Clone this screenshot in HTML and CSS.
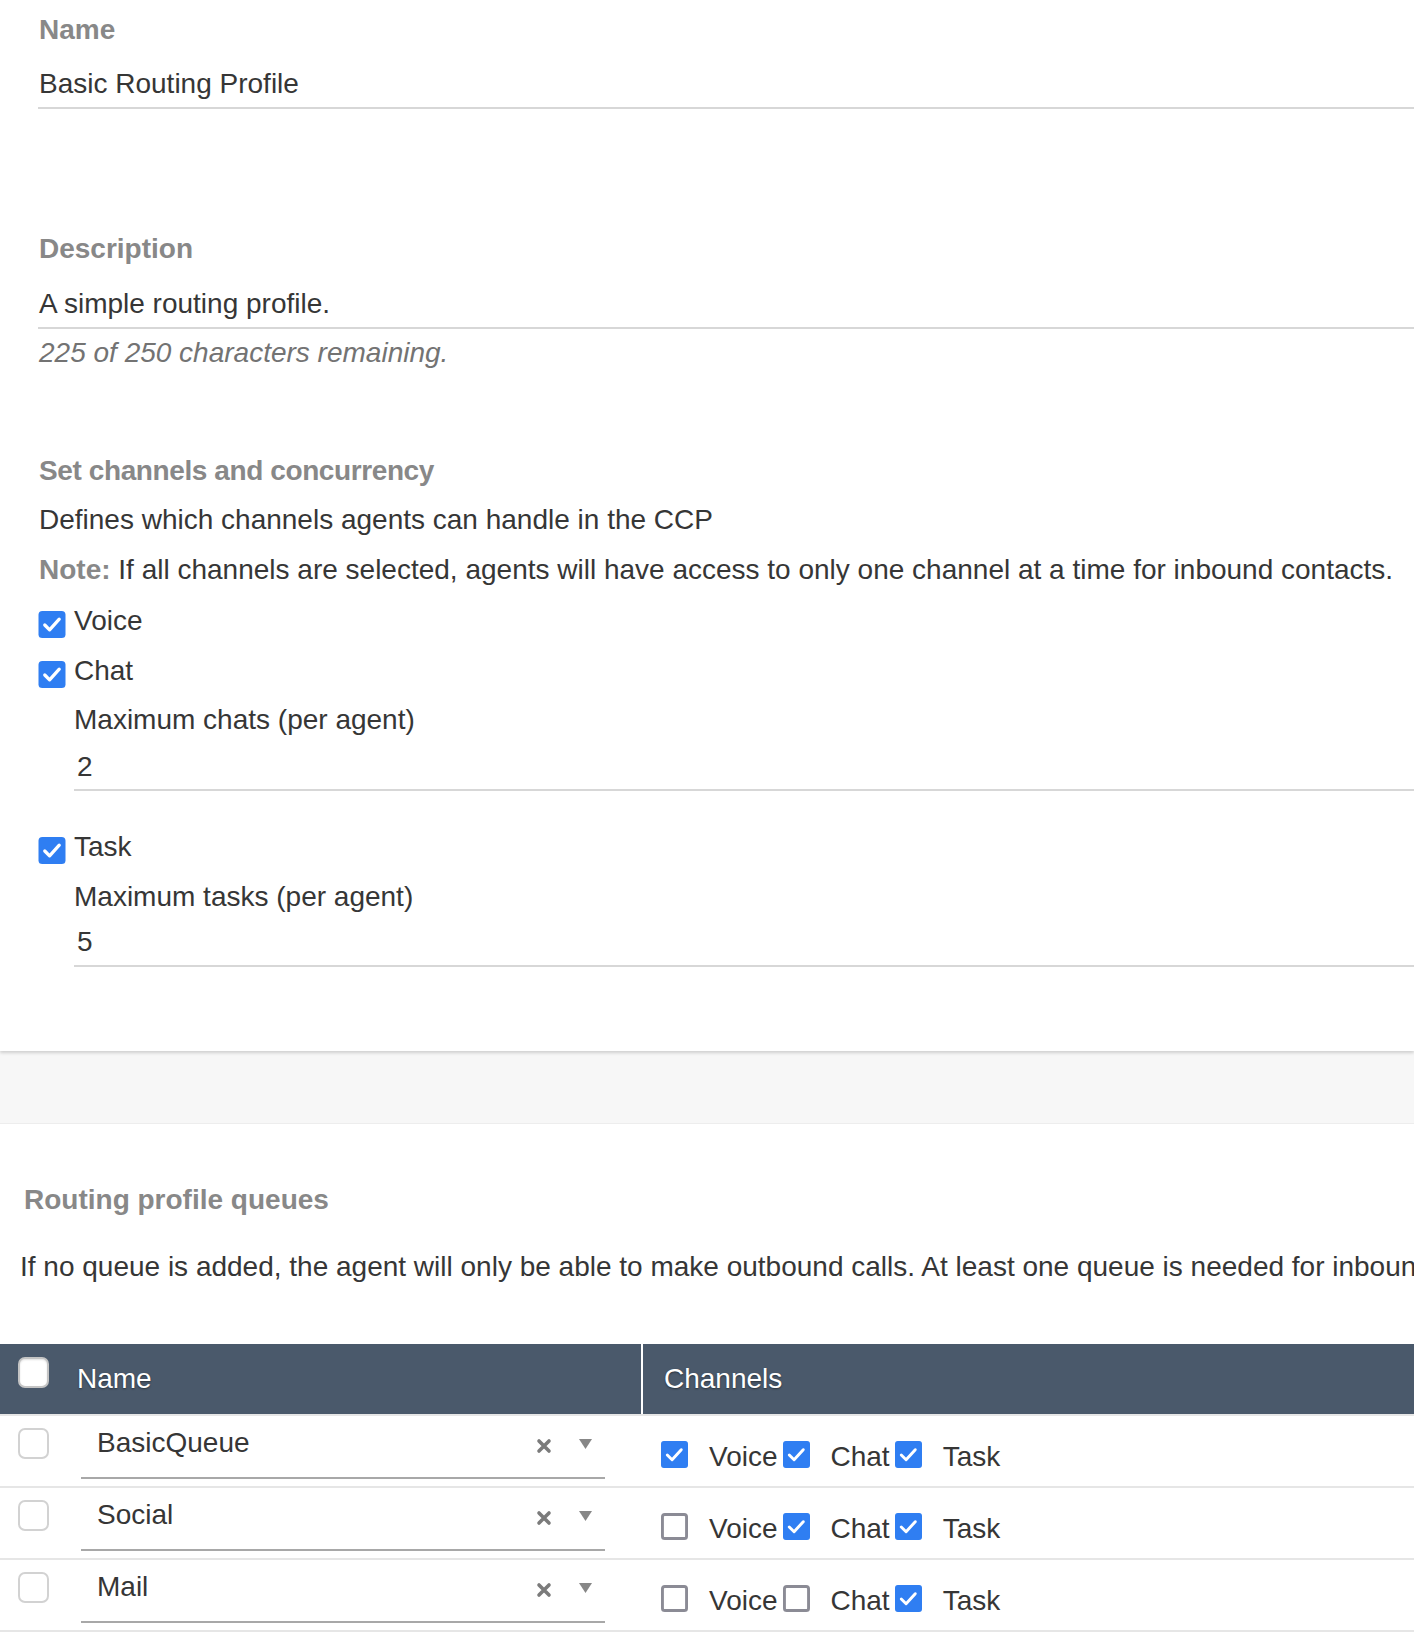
FILE: index.html
```html
<!DOCTYPE html>
<html lang="en">
<head>
<meta charset="utf-8">
<title>Edit routing profile</title>
<link rel="stylesheet" href="styles.css">
</head>
<body>
<main class="page">
  <section class="card">
    <div class="field">
      <div class="label">Name</div>
      <div class="input input-name">Basic Routing Profile</div>
    </div>
    <div class="field field-desc">
      <div class="label">Description</div>
      <div class="input input-desc">A simple routing profile.</div>
      <div class="hint">225 of 250 characters remaining.</div>
    </div>
    <div class="channels">
      <div class="label label-tight">Set channels and concurrency</div>
      <p class="text defines">Defines which channels agents can handle in the CCP</p>
      <p class="text note"><span class="note-key">Note:</span> If all channels are selected, agents will have access to only one channel at a time for inbound contacts.</p>

      <div class="check-row row-voice">
        <svg class="cb" viewBox="0 0 28 28" aria-hidden="true"><rect width="28" height="28" rx="4" fill="#2f7ef2"/><path d="M6.5 14.5 L11.5 19.5 L21.5 8.5" fill="none" stroke="#fff" stroke-width="3.4" stroke-linecap="round" stroke-linejoin="round"/></svg>
        <span>Voice</span>
      </div>
      <div class="check-row row-chat">
        <svg class="cb" viewBox="0 0 28 28" aria-hidden="true"><rect width="28" height="28" rx="4" fill="#2f7ef2"/><path d="M6.5 14.5 L11.5 19.5 L21.5 8.5" fill="none" stroke="#fff" stroke-width="3.4" stroke-linecap="round" stroke-linejoin="round"/></svg>
        <span>Chat</span>
      </div>
      <div class="sub">
        <div class="sub-label">Maximum chats (per agent)</div>
        <div class="sub-input">2</div>
      </div>
      <div class="check-row row-task">
        <svg class="cb" viewBox="0 0 28 28" aria-hidden="true"><rect width="28" height="28" rx="4" fill="#2f7ef2"/><path d="M6.5 14.5 L11.5 19.5 L21.5 8.5" fill="none" stroke="#fff" stroke-width="3.4" stroke-linecap="round" stroke-linejoin="round"/></svg>
        <span>Task</span>
      </div>
      <div class="sub">
        <div class="sub-label">Maximum tasks (per agent)</div>
        <div class="sub-input sub-input-last">5</div>
      </div>
    </div>
  </section>

  <div class="band"></div>

  <section class="queues">
    <h2 class="label q-title">Routing profile queues</h2>
    <div class="q-desc-wrap">
      <p class="text q-desc">If no queue is added, the agent will only be able to make outbound calls. At least one queue is needed for inbound contacts.</p>
    </div>

    <div class="qtable">
      <div class="qhead">
        <div class="qh-name"><span class="hcb"></span><span class="qh-text">Name</span></div>
        <div class="qh-ch"><span class="qh-text">Channels</span></div>
      </div>

      <div class="qrow">
        <div class="qc-name">
          <span class="rcb"></span>
          <div class="select">
            <span class="select-value">BasicQueue</span>
            <svg class="clear" viewBox="0 0 16 16" aria-hidden="true"><path d="M3 3 L13 13 M13 3 L3 13" stroke="#7b7b7b" stroke-width="3.6" stroke-linecap="round"/></svg>
            <svg class="caret" viewBox="0 0 13 10" aria-hidden="true"><polygon points="0,0 13,0 6.5,10" fill="#878787"/></svg>
          </div>
        </div>
        <div class="qc-ch">
          <svg class="tcb" viewBox="0 0 28 28" aria-hidden="true"><rect width="28" height="28" rx="3" fill="#2f7ef2"/><path d="M6.5 14.5 L11.5 19.5 L21 9" fill="none" stroke="#fff" stroke-width="3" stroke-linecap="round" stroke-linejoin="round"/></svg>
          <span class="ch-label">Voice</span>
          <svg class="tcb" viewBox="0 0 28 28" aria-hidden="true"><rect width="28" height="28" rx="3" fill="#2f7ef2"/><path d="M6.5 14.5 L11.5 19.5 L21 9" fill="none" stroke="#fff" stroke-width="3" stroke-linecap="round" stroke-linejoin="round"/></svg>
          <span class="ch-label">Chat</span>
          <svg class="tcb" viewBox="0 0 28 28" aria-hidden="true"><rect width="28" height="28" rx="3" fill="#2f7ef2"/><path d="M6.5 14.5 L11.5 19.5 L21 9" fill="none" stroke="#fff" stroke-width="3" stroke-linecap="round" stroke-linejoin="round"/></svg>
          <span class="ch-label">Task</span>
        </div>
      </div>

      <div class="qrow">
        <div class="qc-name">
          <span class="rcb"></span>
          <div class="select">
            <span class="select-value">Social</span>
            <svg class="clear" viewBox="0 0 16 16" aria-hidden="true"><path d="M3 3 L13 13 M13 3 L3 13" stroke="#7b7b7b" stroke-width="3.6" stroke-linecap="round"/></svg>
            <svg class="caret" viewBox="0 0 13 10" aria-hidden="true"><polygon points="0,0 13,0 6.5,10" fill="#878787"/></svg>
          </div>
        </div>
        <div class="qc-ch">
          <svg class="tcb" viewBox="0 0 28 28" aria-hidden="true"><rect x="1.5" y="1.5" width="25" height="25" rx="2.5" fill="#fff" stroke="#8b8b95" stroke-width="3"/></svg>
          <span class="ch-label">Voice</span>
          <svg class="tcb" viewBox="0 0 28 28" aria-hidden="true"><rect width="28" height="28" rx="3" fill="#2f7ef2"/><path d="M6.5 14.5 L11.5 19.5 L21 9" fill="none" stroke="#fff" stroke-width="3" stroke-linecap="round" stroke-linejoin="round"/></svg>
          <span class="ch-label">Chat</span>
          <svg class="tcb" viewBox="0 0 28 28" aria-hidden="true"><rect width="28" height="28" rx="3" fill="#2f7ef2"/><path d="M6.5 14.5 L11.5 19.5 L21 9" fill="none" stroke="#fff" stroke-width="3" stroke-linecap="round" stroke-linejoin="round"/></svg>
          <span class="ch-label">Task</span>
        </div>
      </div>

      <div class="qrow qrow-last">
        <div class="qc-name">
          <span class="rcb"></span>
          <div class="select">
            <span class="select-value">Mail</span>
            <svg class="clear" viewBox="0 0 16 16" aria-hidden="true"><path d="M3 3 L13 13 M13 3 L3 13" stroke="#7b7b7b" stroke-width="3.6" stroke-linecap="round"/></svg>
            <svg class="caret" viewBox="0 0 13 10" aria-hidden="true"><polygon points="0,0 13,0 6.5,10" fill="#878787"/></svg>
          </div>
        </div>
        <div class="qc-ch">
          <svg class="tcb" viewBox="0 0 28 28" aria-hidden="true"><rect x="1.5" y="1.5" width="25" height="25" rx="2.5" fill="#fff" stroke="#8b8b95" stroke-width="3"/></svg>
          <span class="ch-label">Voice</span>
          <svg class="tcb" viewBox="0 0 28 28" aria-hidden="true"><rect x="1.5" y="1.5" width="25" height="25" rx="2.5" fill="#fff" stroke="#8b8b95" stroke-width="3"/></svg>
          <span class="ch-label">Chat</span>
          <svg class="tcb" viewBox="0 0 28 28" aria-hidden="true"><rect width="28" height="28" rx="3" fill="#2f7ef2"/><path d="M6.5 14.5 L11.5 19.5 L21 9" fill="none" stroke="#fff" stroke-width="3" stroke-linecap="round" stroke-linejoin="round"/></svg>
          <span class="ch-label">Task</span>
        </div>
      </div>
    </div>
  </section>
</main>
</body>
</html>
```

FILE: styles.css
```css
* {
  box-sizing: border-box;
}

html,
body {
  margin: 0;
  padding: 0;
  background: #ffffff;
}

body {
  font-family: "Liberation Sans", Arial, sans-serif;
  font-size: 28px;
  line-height: 34px;
  color: #363636;
  overflow: hidden;
}

p,
h2 {
  margin: 0;
  font-size: inherit;
  font-weight: inherit;
}

.page {
  width: 1414px;
  overflow: hidden;
}

/* ---------- top card ---------- */
.card {
  position: relative;
  z-index: 1;
  background: #ffffff;
  padding: 13px 0 84px 38px;
  box-shadow: 0 2px 3px rgba(0, 0, 0, 0.16);
}

.label {
  color: #888888;
  font-weight: 700;
  padding-left: 1px;
  white-space: nowrap;
}

.label-tight {
  letter-spacing: -0.4px;
}

.input {
  padding: 0 0 6px 1px;
  border-bottom: 2px solid #d7d7d7;
  white-space: nowrap;
}

.input-name {
  margin-top: 20px;
}

.field-desc {
  margin-top: 123px;
}

.input-desc {
  margin-top: 21px;
}

.hint {
  margin-top: 7px;
  padding-left: 1px;
  font-style: italic;
  color: #737373;
  white-space: nowrap;
}

.channels {
  margin-top: 84px;
}

.text {
  white-space: nowrap;
}

.defines {
  padding-left: 1px;
  margin-top: 15px;
}

.note {
  padding-left: 1px;
  margin-top: 16px;
}

.note-key {
  color: #888888;
  font-weight: 700;
}

.check-row {
  display: flex;
  align-items: flex-start;
  gap: 8px;
}

.row-voice {
  margin-top: 17px;
}

.row-chat {
  margin-top: 16px;
}

.row-task {
  margin-top: 39px;
}

.cb {
  width: 28px;
  height: 27px;
  margin-top: 7px;
  flex: none;
}

.sub {
  padding-left: 36px;
}

.sub-label {
  margin-top: 15px;
  white-space: nowrap;
}

.sub-input {
  margin-top: 13px;
  padding: 0 0 5px 3px;
  border-bottom: 2px solid #d7d7d7;
}

.sub-input-last {
  padding-bottom: 6px;
}

.row-task + .sub .sub-label {
  margin-top: 16px;
}

.row-task + .sub .sub-input {
  margin-top: 11px;
}

/* ---------- band ---------- */
.band {
  height: 73px;
  background: #f7f7f7;
  border-bottom: 1px solid #ededed;
}

/* ---------- queues ---------- */
.queues {
  padding-top: 59px;
}

.q-title {
  padding-left: 24px;
}

.q-desc-wrap {
  margin-top: 33px;
  width: 1414px;
  overflow: hidden;
}

.q-desc {
  padding-left: 20px;
}

.qtable {
  margin-top: 60px;
}

.qhead {
  display: grid;
  grid-template-columns: 641px 1fr;
  height: 70px;
  background: #4a596b;
  color: #ffffff;
}

.qh-text {
  text-shadow: 0 1px 2px rgba(0, 0, 0, 0.45);
}

.qh-name {
  display: flex;
  align-items: center;
  padding-left: 18px;
}

.hcb {
  align-self: flex-start;
  width: 31px;
  height: 31px;
  margin-top: 13px;
  margin-right: 28px;
  background: #ffffff;
  border: 2px solid #c4c4c4;
  border-radius: 7px;
  box-shadow: inset 0 1px 2px rgba(0, 0, 0, 0.12);
  flex: none;
}

.qh-ch {
  display: flex;
  align-items: center;
  border-left: 2px solid #ffffff;
  padding-left: 21px;
}

.qrow {
  display: grid;
  grid-template-columns: 641px 1fr;
  height: 72px;
  border-top: 2px solid #e6e6e6;
}

.qrow-last {
  height: 74px;
  border-bottom: 2px solid #e6e6e6;
}

.qc-name {
  display: flex;
  align-items: flex-start;
  padding-left: 18px;
}

.rcb {
  width: 31px;
  height: 31px;
  margin-top: 12px;
  border: 2px solid #d2d2d2;
  border-radius: 7px;
  background: #ffffff;
  flex: none;
}

.select {
  display: flex;
  align-items: center;
  width: 524px;
  margin-left: 32px;
  margin-top: 10px;
  padding: 0 13px 17px 16px;
  border-bottom: 2px solid #a8a8a8;
}

.select-value {
  flex: 1;
  white-space: nowrap;
}

.clear {
  width: 16px;
  height: 16px;
  margin-top: 5px;
  flex: none;
}

.caret {
  width: 13px;
  height: 10px;
  margin-left: 27px;
  margin-top: 1px;
  flex: none;
}

.qc-ch {
  display: flex;
  align-items: flex-start;
  padding-left: 20px;
}

.tcb {
  width: 27px;
  height: 27px;
  margin-top: 25px;
  flex: none;
}

.ch-label {
  margin-top: 24px;
  padding-left: 21px;
  padding-right: 5px;
  white-space: nowrap;
}
```
